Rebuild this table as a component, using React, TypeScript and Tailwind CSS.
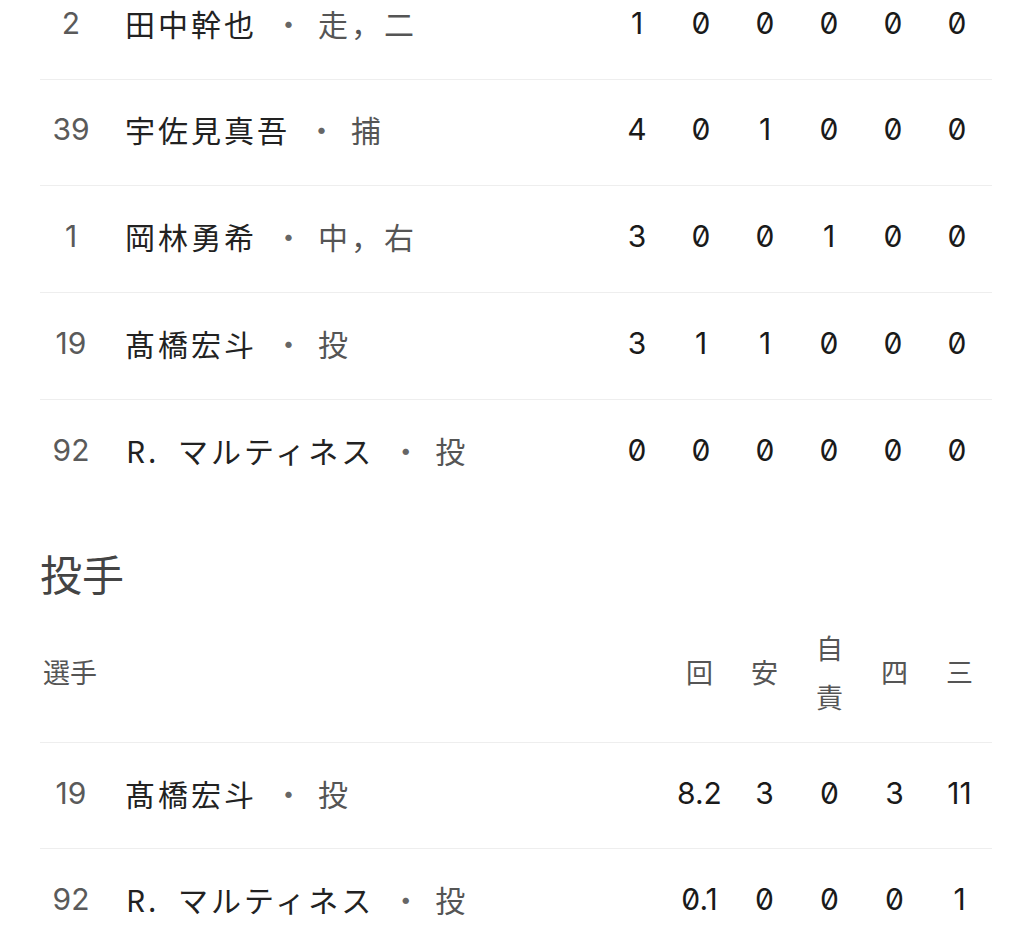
import React from "react";

type Row = { no: string; name: string; pos: string; stats: string[] };

const batting: Row[] = [
  { no: "2", name: "田中幹也", pos: "走，二", stats: ["1", "0", "0", "0", "0", "0"] },
  { no: "39", name: "宇佐見真吾", pos: "捕", stats: ["4", "0", "1", "0", "0", "0"] },
  { no: "1", name: "岡林勇希", pos: "中，右", stats: ["3", "0", "0", "1", "0", "0"] },
  { no: "19", name: "髙橋宏斗", pos: "投", stats: ["3", "1", "1", "0", "0", "0"] },
  { no: "92", name: "R. マルティネス", pos: "投", stats: ["0", "0", "0", "0", "0", "0"] },
];

const pitching: Row[] = [
  { no: "19", name: "髙橋宏斗", pos: "投", stats: ["8.2", "3", "0", "3", "11"] },
  { no: "92", name: "R. マルティネス", pos: "投", stats: ["0.1", "0", "0", "0", "1"] },
];

const batHeights = ["h-[107px]", "h-[106px]", "h-[107px]", "h-[107px]", "h-[107px]"];

function Name({ name }: { name: string }) {
  if (name.startsWith("R. ")) {
    return (
      <span className="text-[#222222]">
        <span className="inline-block w-[53px] pl-[1px]">R.</span>
        {name.slice(3)}
      </span>
    );
  }
  return <span className="text-[#222222]">{name}</span>;
}

function PlayerCell({ no, name, pos }: { no: string; name: string; pos: string }) {
  return (
    <>
      <div className="w-[62px] shrink-0 text-center font-['Inter',sans-serif] text-[30px] text-[#5a5a5a] slashed-zero">
        {no}
      </div>
      <div className="flex-1 flex items-center pl-[23px] font-['Noto_Sans_CJK_JP',sans-serif] text-[30px] tracking-[3px] whitespace-nowrap">
        <Name name={name} />
        <span className="inline-block w-[33px] ml-[15px] mr-[13px] text-center tracking-normal text-[#666666]">・</span>
        <span className="text-[#555555]">{pos}</span>
      </div>
    </>
  );
}

export default function App() {
  return (
    <div className="w-[1024px] h-[928px] overflow-hidden bg-white pl-10 pr-8">
      <div className="mt-[-28px]">
        {batting.map((r, i) => (
          <div key={i} className={`flex items-center ${batHeights[i]} pb-[6px] border-t border-[#eeeeee]`}>
            <PlayerCell no={r.no} name={r.name} pos={r.pos} />
            <div className="flex pr-[3px]">
              {r.stats.map((s, j) => (
                <div key={j} className="w-[64px] text-center font-['Inter',sans-serif] text-[30px] text-[#1a1a1a] slashed-zero">
                  {s}
                </div>
              ))}
            </div>
          </div>
        ))}
      </div>

      <div className="mt-[35px] h-[63px] leading-[63px] font-['Noto_Sans_CJK_JP',sans-serif] text-[42px] text-[#444444]">
        投手
      </div>

      <div className="flex items-center h-[138px] pb-[2px] font-['Noto_Sans_CJK_JP',sans-serif] text-[27px] text-[#555555]">
        <div className="flex-1 pl-[3px]">選手</div>
        <div className="flex items-center">
          <div className="w-[65px] text-center">回</div>
          <div className="w-[65px] text-center">安</div>
          <div className="w-[65px] text-center leading-[49px] flex flex-col">
            <span>自</span>
            <span>責</span>
          </div>
          <div className="w-[65px] text-center">四</div>
          <div className="w-[65px] text-center">三</div>
        </div>
      </div>

      <div>
        {pitching.map((r, i) => (
          <div key={i} className="flex items-center h-[106px] pb-[4px] border-t border-[#eeeeee]">
            <PlayerCell no={r.no} name={r.name} pos={r.pos} />
            <div className="flex">
              {r.stats.map((s, j) => (
                <div key={j} className="w-[65px] text-center font-['Inter',sans-serif] text-[30px] text-[#1a1a1a] slashed-zero">
                  {s}
                </div>
              ))}
            </div>
          </div>
        ))}
      </div>
    </div>
  );
}
